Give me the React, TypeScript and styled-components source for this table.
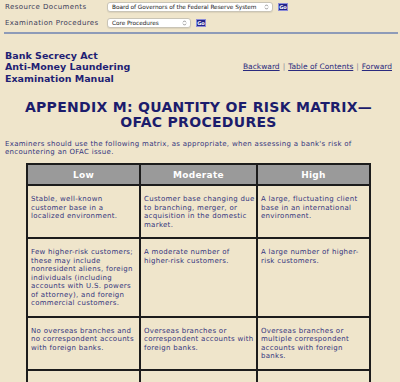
import React from "react";
import styled, { createGlobalStyle } from "styled-components";

const GlobalStyle = createGlobalStyle`
  html, body {
    margin: 0;
    padding: 0;
    background: #efe5cb;
  }
  body {
    font-family: Verdana, "DejaVu Sans", sans-serif;
    color: #2e2e7c;
  }
`;

const Page = styled.div`
  padding: 1px 8px 0 5px;
  display: flex;
  flex-direction: column;
`;

const FormArea = styled.div`
  display: flex;
  flex-direction: column;
  gap: 5px;
`;

const FormRow = styled.div`
  display: grid;
  grid-template-columns: 102px auto auto;
  justify-content: start;
  align-items: center;
  height: 11px;
`;

const FormLabel = styled.span`
  font-size: 7px;
  letter-spacing: 0.4px;
  color: #3c3c5a;
  line-height: 8px;
  white-space: nowrap;
`;

const SelectBox = styled.div<{ $w: number }>`
  position: relative;
  width: ${(p) => p.$w}px;
  height: 10px;
  box-sizing: border-box;
  background: #fff;
  border: 1px solid #c9c4b6;
  border-radius: 3px;
  display: flex;
  align-items: center;
  padding-left: 4px;
  font-size: 5.8px;
  letter-spacing: -0.05px;
  color: #222;
  white-space: nowrap;
  overflow: hidden;
  box-shadow: 0 1px 1px rgba(0, 0, 0, 0.08);
`;

const Arrows = styled.svg`
  position: absolute;
  right: 3px;
  top: 1.5px;
`;

const GoButton = styled.button`
  margin-left: 5px;
  width: 10px;
  height: 8px;
  padding: 0;
  box-sizing: border-box;
  border: 1px solid #8c8cd8;
  background: #23238a;
  color: #fff;
  font-family: Verdana, "DejaVu Sans", sans-serif;
  font-size: 5px;
  font-weight: bold;
  line-height: 6px;
  display: flex;
  align-items: center;
  justify-content: center;
`;

const Rule = styled.div`
  margin: 4px -6px 0 -1px;
  height: 2px;
  background: #8e9bb8;
`;

const TitleBar = styled.div`
  margin-top: 16px;
  display: flex;
  justify-content: space-between;
  align-items: center;
`;

const ManualTitle = styled.div`
  font-size: 9.5px;
  font-weight: bold;
  line-height: 11.3px;
  color: #1f1f74;
`;

const NavLinks = styled.div`
  font-size: 7.5px;
  color: #8a8a9a;
  display: flex;
  gap: 3px;
`;

const NavLink = styled.a`
  color: #2a2a7e;
  text-decoration: underline;
`;

const Heading = styled.h1`
  margin: 16px 0 0 0;
  font-size: 14px;
  line-height: 15.5px;
  font-weight: bold;
  text-align: center;
  color: #1c1c6c;
  letter-spacing: 0.3px;
`;

const Intro = styled.p`
  margin: 9px 0 0 0;
  font-size: 7px;
  line-height: 8.3px;
  letter-spacing: 0.3px;
  color: #35357e;
`;

const Line = styled.span`
  display: block;
  white-space: nowrap;
`;

const Matrix = styled.table`
  margin: 7px auto 0 auto;
  width: 343px;
  border-collapse: collapse;
  table-layout: fixed;
  border: 2px solid #1c1c1c;
`;

const HeadCell = styled.th<{ $w: number }>`
  width: ${(p) => p.$w}px;
  height: 19px;
  padding: 0;
  background: #9a9a9a;
  color: #fff;
  font-size: 9px;
  font-weight: bold;
  border: 2px solid #1c1c1c;
  letter-spacing: 0.3px;
`;

const Cell = styled.td`
  vertical-align: top;
  border: 2px solid #1c1c1c;
  padding: 9px 2px 8px 3px;
  font-size: 7px;
  line-height: 8.5px;
  letter-spacing: 0.3px;
  color: #35357e;
  overflow: hidden;
`;

const EmptyCell = styled.td`
  border: 2px solid #1c1c1c;
  height: 30px;
  padding: 0;
`;

const rows: string[][][] = [
  [
    ["Stable, well-known", "customer base in a", "localized environment."],
    ["Customer base changing due", "to branching, merger, or", "acquisition in the domestic", "market."],
    ["A large, fluctuating client", "base in an international", "environment."],
  ],
  [
    [
      "Few higher-risk customers;",
      "these may include",
      "nonresident aliens, foreign",
      "individuals (including",
      "accounts with U.S. powers",
      "of attorney), and foreign",
      "commercial customers.",
    ],
    ["A moderate number of", "higher-risk customers."],
    ["A large number of higher-", "risk customers."],
  ],
  [
    ["No overseas branches and", "no correspondent accounts", "with foreign banks."],
    ["Overseas branches or", "correspondent accounts with", "foreign banks."],
    ["Overseas branches or", "multiple correspondent", "accounts with foreign", "banks."],
  ],
];

const UpDown = () => (
  <Arrows width="5" height="6" viewBox="0 0 5 6">
    <path d="M1 2.3 L2.5 0.8 L4 2.3 M1 3.7 L2.5 5.2 L4 3.7" fill="none" stroke="#777" strokeWidth="0.8" />
  </Arrows>
);

export default function App() {
  return (
    <>
      <GlobalStyle />
      <Page>
        <FormArea>
          <FormRow>
            <FormLabel>Resource Documents</FormLabel>
            <SelectBox $w={166}>
              Board of Governors of the Federal Reserve System
              <UpDown />
            </SelectBox>
            <GoButton>Go</GoButton>
          </FormRow>
          <FormRow>
            <FormLabel>Examination Procedures</FormLabel>
            <SelectBox $w={84}>
              Core Procedures
              <UpDown />
            </SelectBox>
            <GoButton>Go</GoButton>
          </FormRow>
        </FormArea>
        <Rule />
        <TitleBar>
          <ManualTitle>
            Bank Secrecy Act
            <br />
            Anti-Money Laundering
            <br />
            Examination Manual
          </ManualTitle>
          <NavLinks>
            <NavLink href="#">Backward</NavLink>|
            <NavLink href="#">Table of Contents</NavLink>|
            <NavLink href="#">Forward</NavLink>
          </NavLinks>
        </TitleBar>
        <Heading>
          APPENDIX M: QUANTITY OF RISK MATRIX—
          <br />
          OFAC PROCEDURES
        </Heading>
        <Intro>
          <Line>Examiners should use the following matrix, as appropriate, when assessing a bank's risk of</Line>
          <Line>encountering an OFAC issue.</Line>
        </Intro>
        <Matrix>
          <thead>
            <tr>
              <HeadCell $w={111}>Low</HeadCell>
              <HeadCell $w={115}>Moderate</HeadCell>
              <HeadCell $w={111}>High</HeadCell>
            </tr>
          </thead>
          <tbody>
            {rows.map((r, i) => (
              <tr key={i}>
                {r.map((lines, j) => (
                  <Cell key={j}>
                    {lines.map((l, k) => (
                      <Line key={k}>{l}</Line>
                    ))}
                  </Cell>
                ))}
              </tr>
            ))}
            <tr>
              <EmptyCell />
              <EmptyCell />
              <EmptyCell />
            </tr>
          </tbody>
        </Matrix>
      </Page>
    </>
  );
}
